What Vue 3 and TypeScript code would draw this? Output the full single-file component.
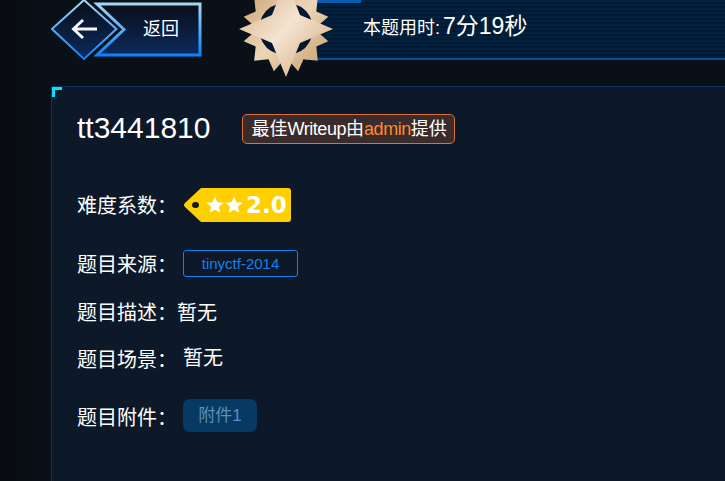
<script setup lang="ts">
const spikes = (() => {
  const pts: string[] = []
  const at = (deg: number, r: number) => {
    const t = (deg * Math.PI) / 180
    return `${(48 + r * Math.cos(t)).toFixed(2)},${(48 + r * Math.sin(t)).toFixed(2)}`
  }
  for (let q = 0; q < 4; q++) {
    const b = q * 90
    pts.push(at(b + 3, 30), at(b + 16, 44), at(b + 30, 35), at(b + 45, 45), at(b + 60, 35), at(b + 74, 44), at(b + 87, 30))
  }
  return pts.join(' ')
})()

const starPath = (cx: number, cy: number, r: number) => {
  const pts: string[] = []
  for (let i = 0; i < 10; i++) {
    const rad = i % 2 === 0 ? r : r * 0.46
    const t = ((-90 + i * 36) * Math.PI) / 180
    pts.push(`${(cx + rad * Math.cos(t)).toFixed(2)},${(cy + rad * Math.sin(t)).toFixed(2)}`)
  }
  return pts.join(' ')
}
const star1 = starPath(31, 17.5, 9)
const star2 = starPath(50, 17.5, 9)
</script>

<template>
  <div class="page">
    <header class="top">
      <div class="band"></div>
      <a class="back">
        <svg class="back-art" width="152" height="64" viewBox="0 0 152 64">
          <defs>
            <linearGradient id="edge" x1="0" y1="0" x2="0" y2="1">
              <stop offset="0" stop-color="#a6d6f2" />
              <stop offset="1" stop-color="#0a84ff" />
            </linearGradient>
            <linearGradient id="fillb" x1="0" y1="0" x2="0" y2="1">
              <stop offset="0" stop-color="#090e18" />
              <stop offset="1" stop-color="#0c2a5c" />
            </linearGradient>
          </defs>
          <path d="M46 5H149V56H46L73 30.500Z" fill="url(#fillb)" stroke="url(#edge)" stroke-width="3" />
          <path d="M32 1L64.500 30L32 60L0 30Z" transform="translate(1 0)" fill="url(#fillb)" stroke="url(#edge)" stroke-width="2" />
          <path d="M22 30H46M32 21L22.500 30L32 39" fill="none" stroke="#f4f6f8" stroke-width="3" />
        </svg>
        <span class="back-text">返回</span>
      </a>
      <svg class="star" width="96" height="96" viewBox="0 0 96 96">
        <defs>
          <linearGradient id="gold" x1="0" y1="0" x2="1" y2="1">
            <stop offset="0" stop-color="#cfa878" />
            <stop offset="0.5" stop-color="#f4e4d2" />
            <stop offset="1" stop-color="#cfa270" />
          </linearGradient>
          <linearGradient id="ring" x1="0" y1="0" x2="1" y2="1">
            <stop offset="0" stop-color="#c8a070" />
            <stop offset="0.5" stop-color="#ecd6b8" />
            <stop offset="1" stop-color="#c89c68" />
          </linearGradient>
        </defs>
        <polygon :points="spikes" fill="url(#ring)" />
        <path d="M22 55Q26 69 40 73Q37 59 22 55Z M74 55Q70 69 56 73Q59 59 74 55Z M22 41Q26 27 40 23Q37 37 22 41Z M74 41Q70 27 56 23Q59 37 74 41Z" fill="#04182e" />
        <polygon points="48,-2 62,34 95,48 62,62 48,96 34,62 1,48 34,34" fill="url(#gold)" />
      </svg>
      <div class="timer">
        <span class="timer-label">本题用时:</span>
        <span class="timer-value">7分19秒</span>
      </div>
    </header>

    <main class="panel">
      <i class="corner"></i>
      <div class="title-row">
        <h1 class="title">tt3441810</h1>
        <span class="best">最佳<span class="latin">Writeup</span>由<b class="author latin">admin</b>提供</span>
      </div>

      <div class="row row-level">
        <span class="label">难度系数：</span>
        <span class="tag">
          <svg class="tag-art" width="107" height="34" viewBox="0 0 107 34">
            <path d="M17 0H104Q107 0 107 3V31Q107 34 104 34H17L1 19Q-1 17 1 15Z" fill="#ffd000" />
            <ellipse cx="11.500" cy="17" rx="3.500" ry="3" fill="#141a22" />
            <polygon :points="star1" fill="#fff" />
            <polygon :points="star2" fill="#fff" />
          </svg>
          <span class="tag-num">2.0</span>
        </span>
      </div>

      <div class="row row-source">
        <span class="label">题目来源：</span>
        <span class="source">tinyctf-2014</span>
      </div>

      <div class="row row-desc">
        <span class="label">题目描述：</span>
        <span class="value">暂无</span>
      </div>

      <div class="row row-scene">
        <span class="label">题目场景：</span>
        <span class="value value-scene">暂无</span>
      </div>

      <div class="row row-file">
        <span class="label">题目附件：</span>
        <span class="file">附件1</span>
      </div>
    </main>
  </div>
</template>

<style>
html,
body {
  margin: 0;
  background: #090e15;
  overflow: hidden;
}
</style>

<style scoped>
.page {
  position: relative;
  width: 725px;
  height: 481px;
  overflow: hidden;
  padding-left: 51px;
  box-sizing: border-box;
  background: linear-gradient(90deg, #070b11 0, #0a1018 50px, #0a1018 100%);
  font-family: "Liberation Sans", "Noto Sans CJK SC", sans-serif;
  color: #fff;
}
.top {
  height: 86px;
  position: relative;
}
.band {
  position: absolute;
  left: 254px;
  top: 0;
  width: 430px;
  height: 60px;
  box-sizing: border-box;
  border-bottom: 2px solid #0a4a8e;
  background: repeating-linear-gradient(180deg, #02213f 0, #02213f 2px, #021a34 2px, #021a34 4px);
}
.band::before {
  content: "";
  position: absolute;
  left: 12px;
  top: 0;
  width: 44px;
  height: 3px;
  background: #0a5cb0;
}
.back {
  position: absolute;
  left: 0;
  top: -1px;
  width: 152px;
  height: 64px;
  display: block;
}
.back-art {
  display: block;
}
.back-text {
  position: absolute;
  left: 92px;
  top: 19px;
  font-size: 18px;
  line-height: 22px;
  color: #fff;
}
.star {
  position: absolute;
  left: 187px;
  top: -19px;
}
.timer {
  position: absolute;
  left: 312px;
  top: 10px;
  display: flex;
  align-items: baseline;
  gap: 3px;
  line-height: 32px;
}
.timer-label {
  font-size: 18px;
}
.timer-value {
  font-size: 23px;
}
.panel {
  position: relative;
  height: 395px;
  box-sizing: border-box;
  margin-right: -2px;
  border-top: 1px solid #0b3560;
  border-left: 1px solid #0b3560;
  background: #0d1928;
  padding: 0 0 0 25px;
}
.corner {
  position: absolute;
  left: 0;
  top: 0;
  width: 7px;
  height: 7px;
  border-top: 3px solid #00e5ff;
  border-left: 3px solid #00e5ff;
}
.title-row {
  display: flex;
  align-items: center;
  height: 34px;
  padding-top: 24px;
  gap: 32px;
}
.title {
  margin: 0;
  font-size: 30px;
  font-weight: 400;
  line-height: 34px;
}
.best {
  box-sizing: border-box;
  height: 30px;
  margin-top: 2px;
  line-height: 29px;
  padding: 0 7px 0 8px;
  border: 1px solid #d9713a;
  border-radius: 5px;
  background: #3c2b2b;
  font-size: 18px;
  color: #fff;
}
.latin {
  letter-spacing: -0.45px;
}
.author {
  font-weight: 400;
  color: #ff8a2b;
}
.row {
  display: flex;
  align-items: center;
  font-size: 20px;
  line-height: 24px;
}
.label {
  width: 106px;
  flex: none;
}
.row-level {
  margin-top: 43px;
  height: 34px;
}
.row-level .label {
  padding-top: 2px;
}
.tag {
  position: relative;
  width: 107px;
  height: 34px;
  margin-left: 1px;
  display: block;
}
.tag-art {
  display: block;
}
.tag-num {
  position: absolute;
  left: 62px;
  top: 4px;
  font-family: "DejaVu Sans", sans-serif;
  font-size: 23px;
  font-weight: 700;
  line-height: 26px;
  color: #fff;
}
.row-source {
  margin-top: 28px;
  height: 27px;
}
.row-source .label {
  padding-top: 2px;
}
.source {
  box-sizing: border-box;
  width: 115px;
  height: 27px;
  border: 1px solid #1282f0;
  border-radius: 3px;
  font-size: 15px;
  line-height: 25px;
  text-align: center;
  color: #1282f0;
}
.row-desc {
  margin-top: 24px;
}
.row-desc .label {
  width: 100px;
}
.row-scene {
  margin-top: 23px;
}
.value-scene {
  position: relative;
  top: -2px;
}
.row-file {
  margin-top: 27px;
  height: 33px;
}
.row-file .label {
  padding-top: 4px;
}
.file {
  box-sizing: border-box;
  width: 74px;
  height: 33px;
  border-radius: 7px;
  background: #063963;
  font-size: 17px;
  line-height: 33px;
  text-align: center;
  color: #5f8fbb;
}
</style>
